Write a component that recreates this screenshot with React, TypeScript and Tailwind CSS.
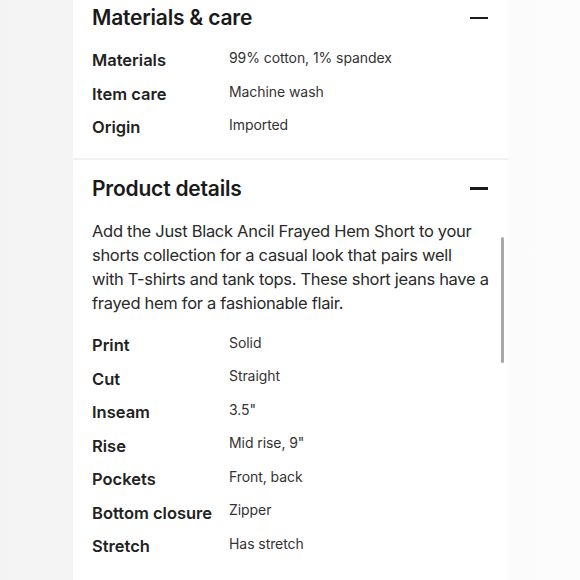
const materials = [
  { label: "Materials", value: "99% cotton, 1% spandex" },
  { label: "Item care", value: "Machine wash" },
  { label: "Origin", value: "Imported" },
];

const details = [
  { label: "Print", value: "Solid" },
  { label: "Cut", value: "Straight" },
  { label: "Inseam", value: '3.5"' },
  { label: "Rise", value: 'Mid rise, 9"' },
  { label: "Pockets", value: "Front, back" },
  { label: "Bottom closure", value: "Zipper" },
  { label: "Stretch", value: "Has stretch" },
];

const description = [
  "Add the Just Black Ancil Frayed Hem Short to your",
  "shorts collection for a casual look that pairs well",
  "with T-shirts and tank tops. These short jeans have a",
  "frayed hem for a fashionable flair.",
];

function SectionHeader({ title }: { title: string }) {
  return (
    <div className="flex h-[28px] items-center justify-between">
      <h2 className="text-[21px] font-semibold tracking-[-0.01em] text-[#1a1a1a]">{title}</h2>
      <span className="h-[2.5px] w-[18px] bg-[#1a1a1a]" />
    </div>
  );
}

function SpecRows({ rows }: { rows: { label: string; value: string }[] }) {
  return (
    <div className="flex flex-col">
      {rows.map((row) => (
        <div key={row.label} className="flex h-[33.5px] items-center">
          <span className="w-[137px] shrink-0 text-[16.5px] font-semibold text-[#222]">{row.label}</span>
          <span className="mb-[6px] text-[14px] tracking-[-0.005em] text-[#333]">{row.value}</span>
        </div>
      ))}
    </div>
  );
}

export default function App() {
  return (
    <div
      className="h-[580px] w-[580px] overflow-hidden bg-gradient-to-r from-[#f3f3f3] via-[#f8f8f8] to-[#fcfcfc]"
      style={{ fontFamily: "Inter, 'Noto Sans', sans-serif" }}
    >
      <div className="relative ml-[73px] h-full w-[435px] bg-white">
        <section className="pb-[13px] pl-[19px] pr-[20px] pt-[4px]">
          <SectionHeader title="Materials & care" />
          <div className="mt-[12px]">
            <SpecRows rows={materials} />
          </div>
        </section>

        <div className="h-[2px] bg-[#f1f1f1]" />

        <section className="pl-[19px] pr-[20px] pt-[15px]">
          <SectionHeader title="Product details" />
          <p className="mt-[16px] whitespace-nowrap text-[16.5px] leading-[24.3px] tracking-[-0.018em] text-[#2a2a2a]">
            {description.map((line) => (
              <span key={line} className="block">
                {line}
              </span>
            ))}
          </p>
          <div className="mt-[13px]">
            <SpecRows rows={details} />
          </div>
        </section>

        <div className="absolute left-[428px] top-[237px] h-[126px] w-[2.5px] rounded-full bg-[#a9a9a9]" />
      </div>
    </div>
  );
}
